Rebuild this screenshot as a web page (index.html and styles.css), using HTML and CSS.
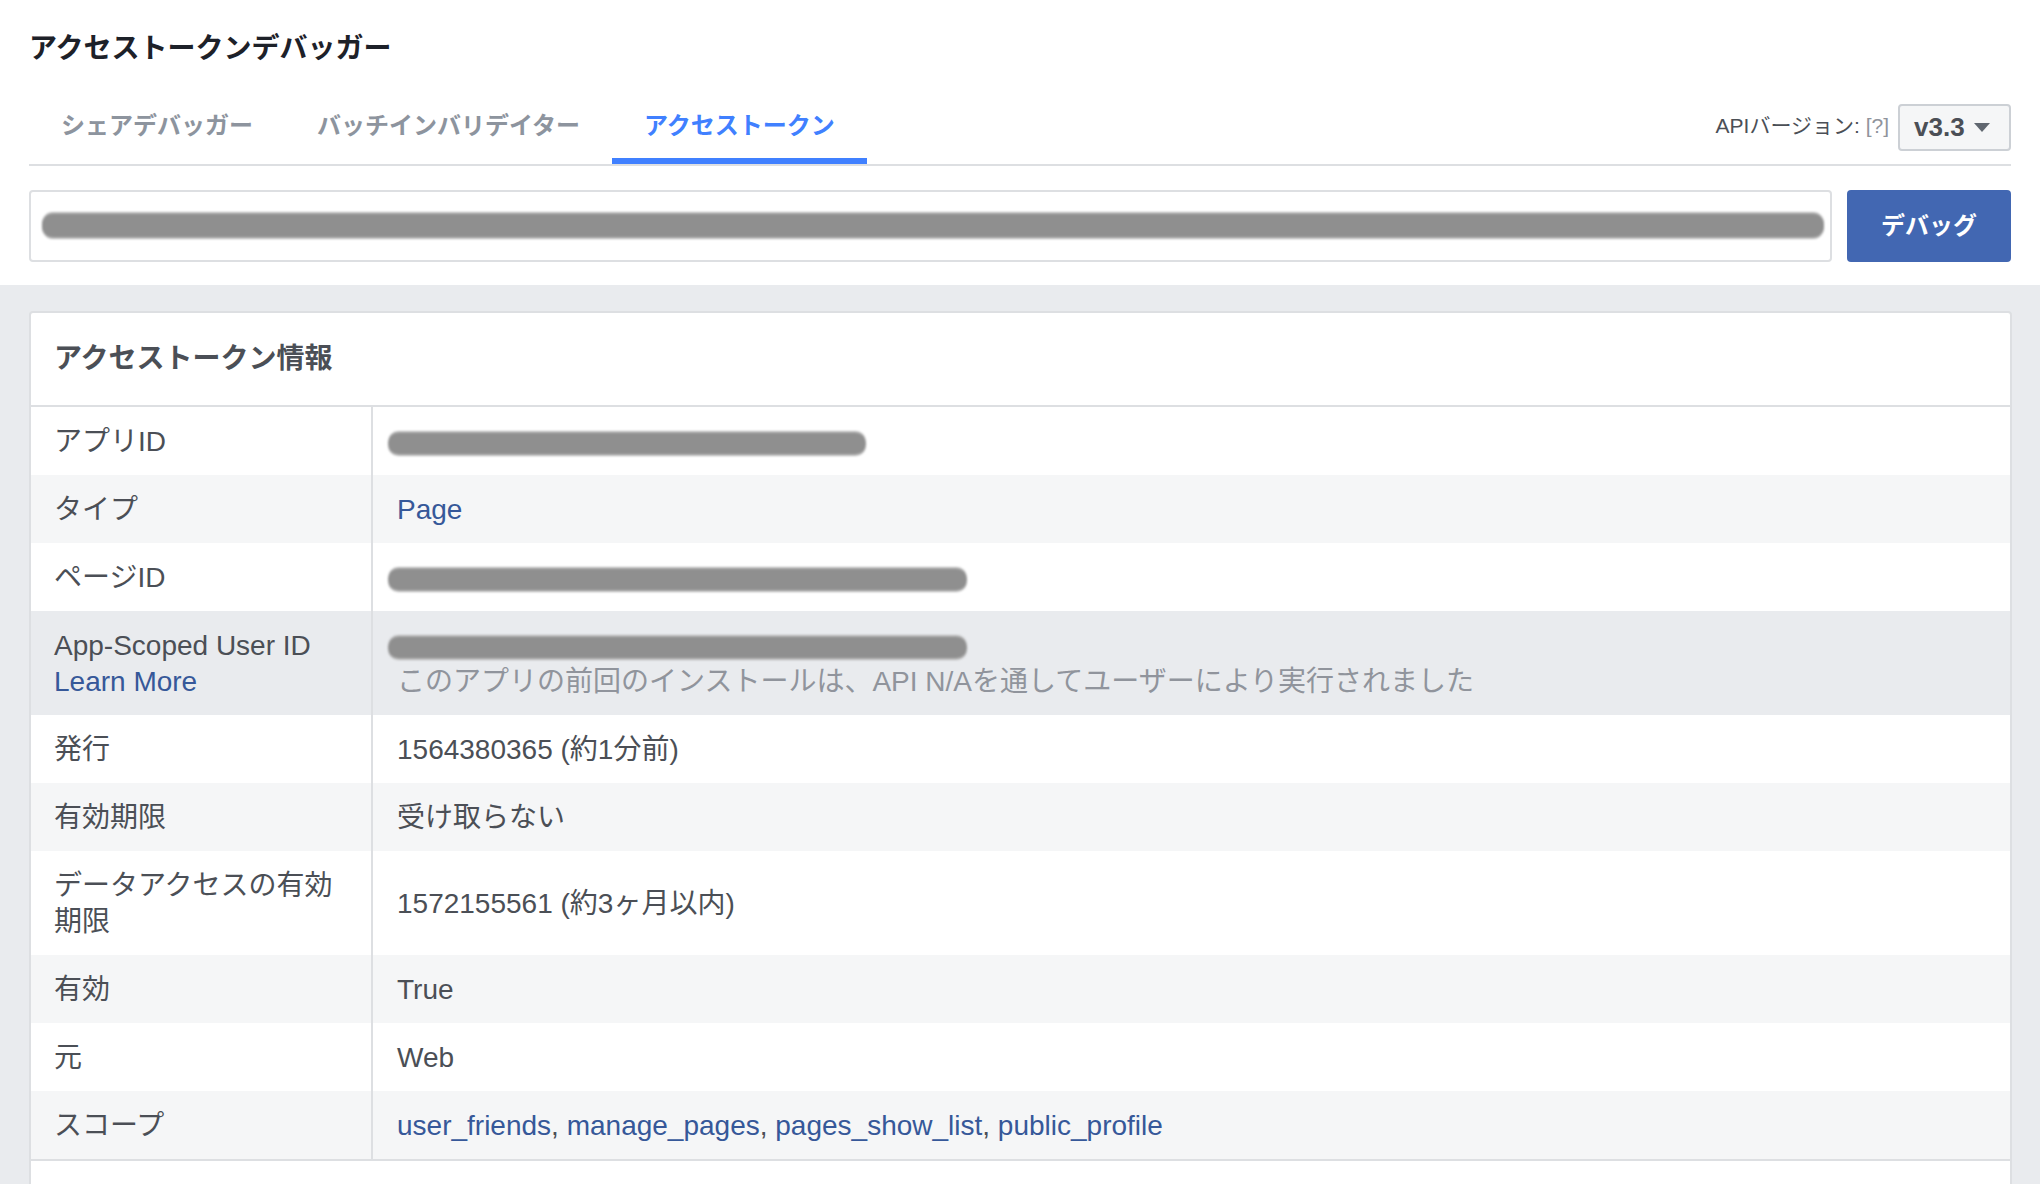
FILE: index.html
```html
<!DOCTYPE html>
<html lang="ja">
<head>
<meta charset="utf-8">
<title>アクセストークンデバッガー</title>
<link rel="stylesheet" href="styles.css">
</head>
<body>
<header class="top">
  <h1 class="title">アクセストークンデバッガー</h1>
  <div class="tabbar">
    <nav class="tabs">
      <a class="tab">シェアデバッガー</a>
      <a class="tab">バッチインバリデイター</a>
      <a class="tab tab-active">アクセストークン</a>
    </nav>
    <div class="version">
      <span class="version-label">APIバージョン: <span class="help">[?]</span></span>
      <button class="version-select"><span>v3.3</span><svg class="caret" width="16" height="9" viewBox="0 0 16 9"><path d="M0 0H16L8 9Z" fill="#606770"/></svg></button>
    </div>
  </div>
  <div class="input-row">
    <div class="token-input"><span class="redact redact-fill"></span></div>
    <button class="debug-btn">デバッグ</button>
  </div>
</header>
<main class="main">
  <section class="card">
    <h2 class="card-title">アクセストークン情報</h2>
    <table class="info">
      <tr><td class="label">アプリID</td><td class="value"><span class="redact redact-app"></span></td></tr>
      <tr class="alt"><td class="label">タイプ</td><td class="value"><a class="link">Page</a></td></tr>
      <tr><td class="label">ページID</td><td class="value"><span class="redact redact-page"></span></td></tr>
      <tr class="hover"><td class="label">App-Scoped User ID<br><a class="link">Learn More</a></td><td class="value"><span class="redact redact-page"></span><br><span class="sub">このアプリの前回のインストールは、API N/Aを通してユーザーにより実行されました</span></td></tr>
      <tr><td class="label">発行</td><td class="value">1564380365 (約1分前)</td></tr>
      <tr class="alt"><td class="label">有効期限</td><td class="value">受け取らない</td></tr>
      <tr><td class="label">データアクセスの有効期限</td><td class="value">1572155561 (約3ヶ月以内)</td></tr>
      <tr class="alt"><td class="label">有効</td><td class="value">True</td></tr>
      <tr><td class="label">元</td><td class="value">Web</td></tr>
      <tr class="alt last"><td class="label">スコープ</td><td class="value"><a class="link">user_friends</a>, <a class="link">manage_pages</a>, <a class="link">pages_show_list</a>, <a class="link">public_profile</a></td></tr>
    </table>
    <div class="card-foot"></div>
  </section>
</main>
</body>
</html>
```

FILE: styles.css
```css
* { box-sizing: border-box; }
html, body { margin: 0; padding: 0; }
body {
  font-family: "Liberation Sans", "Noto Sans CJK JP", sans-serif;
  color: #4b4f56;
  background: #e9ebee;
}
.top {
  background: #fff;
  padding: 31px 29px 23px 29px;
}
.title {
  margin: 0;
  font-size: 28px;
  line-height: 36px;
  font-weight: bold;
  color: #1d2129;
}
.tabbar {
  margin-top: 23px;
  display: flex;
  justify-content: space-between;
  border-bottom: 2px solid #dddfe2;
}
.tabs { display: flex; }
.tab {
  display: block;
  padding: 18px 32px 14px;
  border-bottom: 6px solid transparent;
  font-size: 24px;
  line-height: 36px;
  font-weight: bold;
  color: #8d949e;
}
.tab-active {
  color: #4080ff;
  border-bottom-color: #4080ff;
}
.version {
  align-self: flex-start;
  margin-top: 14px;
  display: flex;
  align-items: center;
  gap: 9px;
}
.version-label {
  font-size: 21px;
  line-height: 28px;
  margin-bottom: 4px;
  color: #4b4f56;
}
.help { color: #90949c; }
.version-select {
  width: 113px;
  height: 47px;
  display: flex;
  align-items: center;
  gap: 9px;
  padding: 0 0 0 14px;
  background: #f5f6f7;
  border: 2px solid #ccd0d5;
  border-radius: 4px;
  font-family: inherit;
  font-size: 26px;
  font-weight: bold;
  color: #4b4f56;
}
.input-row {
  margin-top: 24px;
  display: flex;
  gap: 15px;
}
.token-input {
  flex: 1;
  height: 72px;
  border: 2px solid #dddfe2;
  border-radius: 4px;
  background: #fff;
  padding: 0 6px 2px 11px;
  display: flex;
  align-items: center;
}
.debug-btn {
  width: 164px;
  height: 72px;
  padding: 0 0 6px;
  background: #4267b2;
  color: #fff;
  border: none;
  border-radius: 4px;
  font-family: inherit;
  font-size: 24px;
  font-weight: bold;
}
.redact {
  display: inline-block;
  height: 21px;
  background: #8f8f8f;
  border-radius: 11px;
  box-shadow: 0 -2px 0 #b4b4b4, 0 2px 0 #b4b4b4;
  filter: blur(0.8px);
  vertical-align: middle;
}
.redact-fill { flex: 1; height: 23px; }
.redact-app { width: 478px; margin-left: -9px; }
.redact-page { width: 579px; margin-left: -9px; }
.main {
  padding: 26px 28px 0 29px;
}
.card {
  background: #fff;
  border: 2px solid #dddfe2;
  border-radius: 4px;
}
.card-title {
  margin: 0;
  padding: 28px 23px 28px;
  border-bottom: 2px solid #dddfe2;
  font-size: 28px;
  line-height: 36px;
  font-weight: bold;
  color: #4b4f56;
}
.info {
  width: 100%;
  border-collapse: collapse;
  font-size: 28px;
  line-height: 36px;
}
.info td {
  padding: 17px 24px 15px 24px;
  vertical-align: middle;
}
.info td.label {
  width: 341px;
  padding-left: 23px;
  border-right: 2px solid #dddfe2;
  color: #4b4f56;
}
.info td.value { color: #4b4f56; }
.alt { background: #f5f6f7; }
.hover { background: #e9ebee; }
.last td { border-bottom: 2px solid #dddfe2; }
.link { color: #365899; }
.sub { color: #90949c; }
.card-foot { height: 80px; }
```
